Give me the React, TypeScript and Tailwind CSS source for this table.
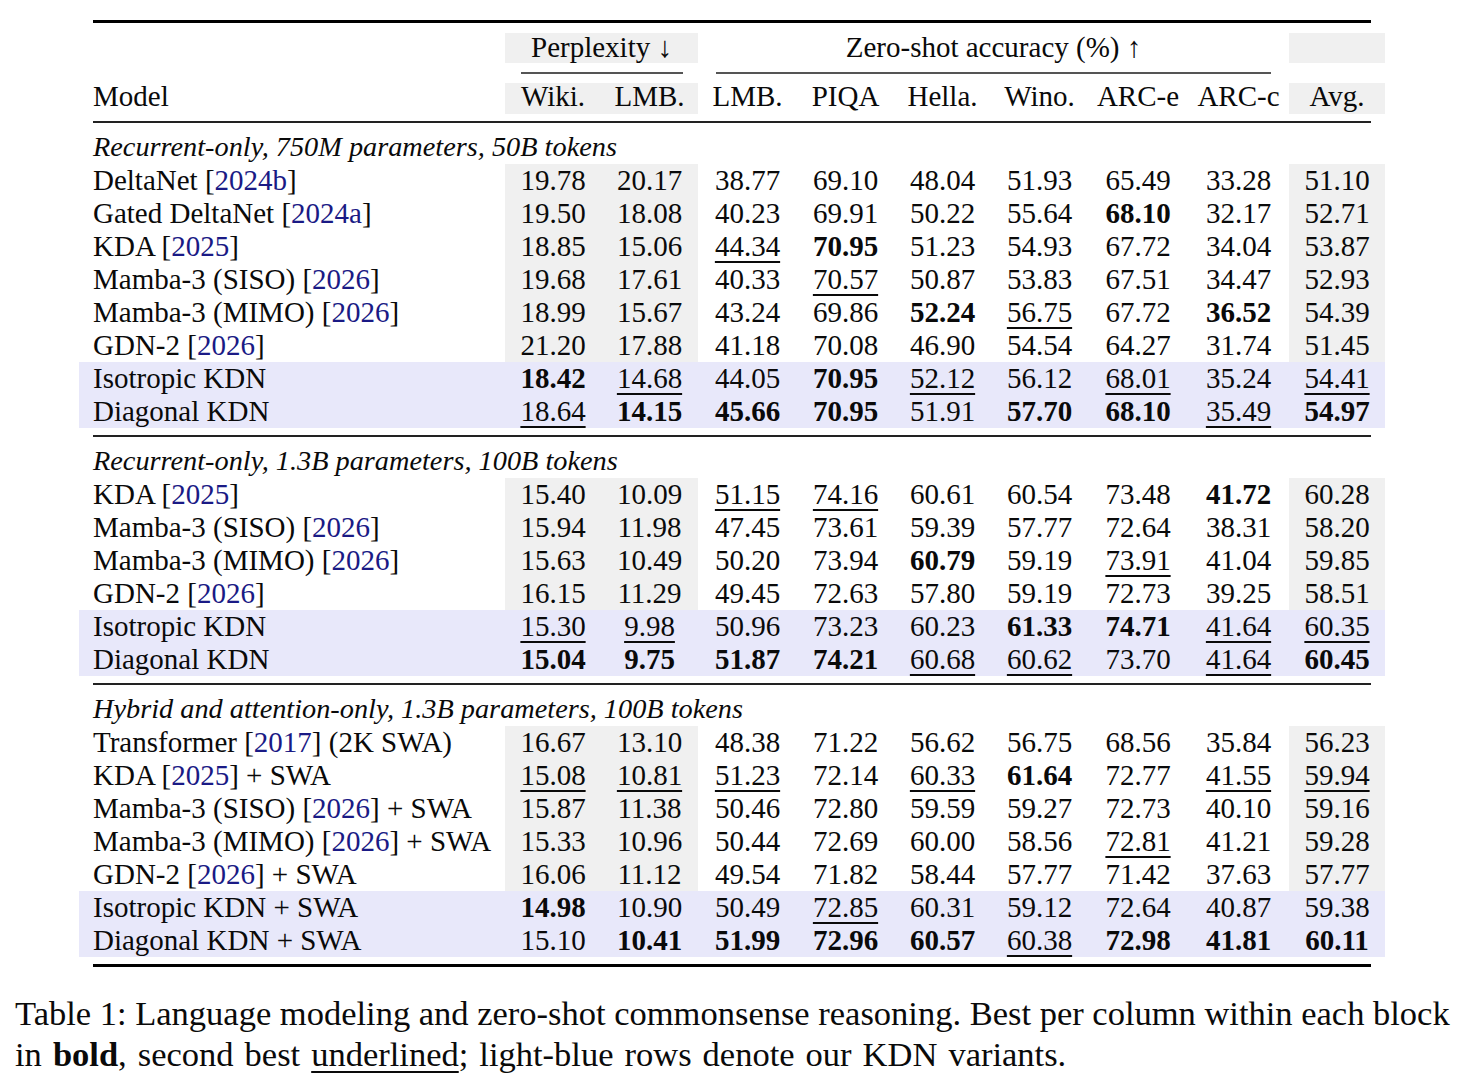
import React from "react";

type Model = [string, string, string];
type RowT = { m: Model; v: string[]; hl?: boolean };
type Section = { title: string; rows: RowT[] };

const W = [
  "w-[96px]",
  "w-[97px]",
  "w-[99px]",
  "w-[97px]",
  "w-[97px]",
  "w-[97px]",
  "w-[100px]",
  "w-[101px]",
  "w-[96px]",
];

const sections: Section[] = [
  {
    title: "Recurrent-only, 750M parameters, 50B tokens",
    rows: [
      { m: ["DeltaNet ", "2024b", ""], v: ["19.78", "20.17", "38.77", "69.10", "48.04", "51.93", "65.49", "33.28", "51.10"] },
      { m: ["Gated DeltaNet ", "2024a", ""], v: ["19.50", "18.08", "40.23", "69.91", "50.22", "55.64", "*68.10", "32.17", "52.71"] },
      { m: ["KDA ", "2025", ""], v: ["18.85", "15.06", "_44.34", "*70.95", "51.23", "54.93", "67.72", "34.04", "53.87"] },
      { m: ["Mamba-3 (SISO) ", "2026", ""], v: ["19.68", "17.61", "40.33", "_70.57", "50.87", "53.83", "67.51", "34.47", "52.93"] },
      { m: ["Mamba-3 (MIMO) ", "2026", ""], v: ["18.99", "15.67", "43.24", "69.86", "*52.24", "_56.75", "67.72", "*36.52", "54.39"] },
      { m: ["GDN-2 ", "2026", ""], v: ["21.20", "17.88", "41.18", "70.08", "46.90", "54.54", "64.27", "31.74", "51.45"] },
      { m: ["Isotropic KDN", "", ""], hl: true, v: ["*18.42", "_14.68", "44.05", "*70.95", "_52.12", "56.12", "_68.01", "35.24", "_54.41"] },
      { m: ["Diagonal KDN", "", ""], hl: true, v: ["_18.64", "*14.15", "*45.66", "*70.95", "51.91", "*57.70", "*68.10", "_35.49", "*54.97"] },
    ],
  },
  {
    title: "Recurrent-only, 1.3B parameters, 100B tokens",
    rows: [
      { m: ["KDA ", "2025", ""], v: ["15.40", "10.09", "_51.15", "_74.16", "60.61", "60.54", "73.48", "*41.72", "60.28"] },
      { m: ["Mamba-3 (SISO) ", "2026", ""], v: ["15.94", "11.98", "47.45", "73.61", "59.39", "57.77", "72.64", "38.31", "58.20"] },
      { m: ["Mamba-3 (MIMO) ", "2026", ""], v: ["15.63", "10.49", "50.20", "73.94", "*60.79", "59.19", "_73.91", "41.04", "59.85"] },
      { m: ["GDN-2 ", "2026", ""], v: ["16.15", "11.29", "49.45", "72.63", "57.80", "59.19", "72.73", "39.25", "58.51"] },
      { m: ["Isotropic KDN", "", ""], hl: true, v: ["_15.30", "_9.98", "50.96", "73.23", "60.23", "*61.33", "*74.71", "_41.64", "_60.35"] },
      { m: ["Diagonal KDN", "", ""], hl: true, v: ["*15.04", "*9.75", "*51.87", "*74.21", "_60.68", "_60.62", "73.70", "_41.64", "*60.45"] },
    ],
  },
  {
    title: "Hybrid and attention-only, 1.3B parameters, 100B tokens",
    rows: [
      { m: ["Transformer ", "2017", " (2K SWA)"], v: ["16.67", "13.10", "48.38", "71.22", "56.62", "56.75", "68.56", "35.84", "56.23"] },
      { m: ["KDA ", "2025", " + SWA"], v: ["_15.08", "_10.81", "_51.23", "72.14", "_60.33", "*61.64", "72.77", "_41.55", "_59.94"] },
      { m: ["Mamba-3 (SISO) ", "2026", " + SWA"], v: ["15.87", "11.38", "50.46", "72.80", "59.59", "59.27", "72.73", "40.10", "59.16"] },
      { m: ["Mamba-3 (MIMO) ", "2026", " + SWA"], v: ["15.33", "10.96", "50.44", "72.69", "60.00", "58.56", "_72.81", "41.21", "59.28"] },
      { m: ["GDN-2 ", "2026", " + SWA"], v: ["16.06", "11.12", "49.54", "71.82", "58.44", "57.77", "71.42", "37.63", "57.77"] },
      { m: ["Isotropic KDN + SWA", "", ""], hl: true, v: ["*14.98", "10.90", "50.49", "_72.85", "60.31", "59.12", "72.64", "40.87", "59.38"] },
      { m: ["Diagonal KDN + SWA", "", ""], hl: true, v: ["15.10", "*10.41", "*51.99", "*72.96", "*60.57", "_60.38", "*72.98", "*41.81", "*60.11"] },
    ],
  },
];

function Val({ s }: { s: string }) {
  if (s.startsWith("*")) return <span className="font-bold">{s.slice(1)}</span>;
  if (s.startsWith("_"))
    return (
      <span className="underline decoration-[1.5px] underline-offset-[5px]">{s.slice(1)}</span>
    );
  return <span>{s}</span>;
}

function DataRow({ r }: { r: RowT }) {
  const [pre, cite, post] = r.m;
  return (
    <div className={r.hl ? "flex h-[33px] bg-[#e8e8fa]" : "flex h-[33px]"}>
      <div className="w-[426px] pl-[14px] flex items-center whitespace-nowrap">
        <span>
          {pre}
          {cite ? (
            <>
              [<span className="text-[#1a1a85]">{cite}</span>]
            </>
          ) : null}
          {post}
        </span>
      </div>
      {r.v.map((v, i) => (
        <div
          key={i}
          className={`${W[i]} flex items-center justify-center ${
            !r.hl && (i < 2 || i === 8) ? "bg-[#f0f0f0]" : ""
          }`}
        >
          <Val s={v} />
        </div>
      ))}
    </div>
  );
}

function Rule({ thick }: { thick?: boolean }) {
  return (
    <div className="py-[7px]">
      <div className={thick ? "mx-[14px] h-[3px] bg-black" : "mx-[14px] h-[2px] bg-[#222]"} />
    </div>
  );
}

export default function App() {
  return (
    <div
      className="w-[1465px] h-[1089px] bg-white text-[#0a0a0a] overflow-hidden"
      style={{ fontFamily: '"Liberation Serif", "Times New Roman", serif' }}
    >
      <div className="ml-[79px] w-[1306px] pt-[20px] text-[29px]">
        <div className="mx-[14px] h-[3px] bg-black" />
        {/* header row 1 */}
        <div className="flex h-[30px] mt-[10px]">
          <div className="w-[426px]" />
          <div className="w-[193px] bg-[#f0f0f0] pb-[1px] flex items-center justify-center whitespace-nowrap">
            Perplexity ↓
          </div>
          <div className="w-[591px] pb-[1px] flex items-center justify-center whitespace-nowrap">
            Zero-shot accuracy (%) ↑
          </div>
          <div className="w-[96px] bg-[#f0f0f0]" />
        </div>
        {/* cmidrules */}
        <div className="flex h-[20px] items-center">
          <div className="w-[426px]" />
          <div className="w-[193px] pl-[16px] pr-[15px]">
            <div className="h-[2px] bg-[#555]" />
          </div>
          <div className="w-[591px] px-[18px]">
            <div className="h-[2px] bg-[#555]" />
          </div>
          <div className="w-[96px]" />
        </div>
        {/* header row 2 */}
        <div className="flex h-[31px]">
          <div className="w-[426px] pl-[14px] pb-[3px] flex items-center">Model</div>
          {["Wiki.", "LMB.", "LMB.", "PIQA", "Hella.", "Wino.", "ARC-e", "ARC-c", "Avg."].map((h, i) => (
            <div
              key={i}
              className={`${W[i]} pb-[3px] flex items-center justify-center whitespace-nowrap ${
                i < 2 || i === 8 ? "bg-[#f0f0f0]" : ""
              }`}
            >
              {h}
            </div>
          ))}
        </div>
        {sections.map((s, si) => (
          <div key={si}>
            <Rule />
            <div className="h-[34px] pl-[14px] flex items-center italic whitespace-nowrap text-[28.3px]">
              {s.title}
            </div>
            {s.rows.map((r, ri) => (
              <DataRow key={ri} r={r} />
            ))}
          </div>
        ))}
        <Rule thick />
      </div>
      <div className="ml-[15px] mt-[19px] text-[34.5px] leading-[41px] whitespace-nowrap">
        <div>
          Table 1: Language modeling and zero-shot commonsense reasoning. Best per column within each block
        </div>
        <div className="[word-spacing:2.4px]">
          in <span className="font-bold">bold</span>, second best{" "}
          <span className="underline decoration-[1.5px] underline-offset-[5px]">underlined</span>; light-blue rows
          denote our KDN variants.
        </div>
      </div>
    </div>
  );
}
